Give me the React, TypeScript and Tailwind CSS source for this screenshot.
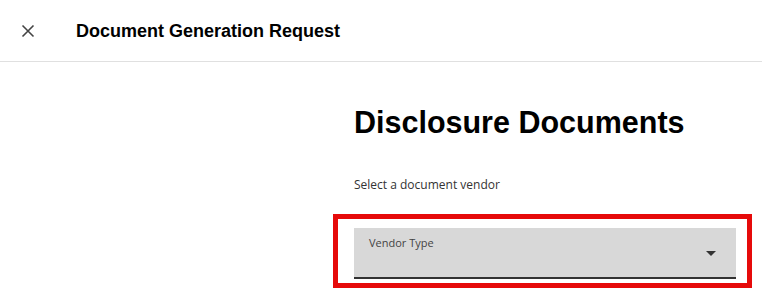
const CloseIcon = () => (
  <svg width="14" height="14" viewBox="0 0 14 14" className="text-[#444]">
    <path d="M1.5 1.5 L12.5 12.5 M12.5 1.5 L1.5 12.5" stroke="currentColor" strokeWidth="1.6" />
  </svg>
);

const VendorSelect = () => {
  return (
    <div className="flex h-[51px] w-[382px] flex-col border-b-2 border-[#333] bg-[#d8d8d8] px-[15px] pt-[7px]">
      <span className="font-['Open_Sans',sans-serif] text-[11px] leading-[16px] text-[#444]">Vendor Type</span>
      <div className="flex justify-end pr-[5px]">
        <svg width="10" height="5" viewBox="0 0 10 5">
          <path d="M0 0 L10 0 L5 5 Z" fill="#333" />
        </svg>
      </div>
    </div>
  );
};

export default function App() {
  return (
    <div className="h-[291px] w-[762px] overflow-hidden bg-white font-['Liberation_Sans',Arial,sans-serif] text-black">
      <header className="flex h-[62px] items-center border-b border-[#e0e0e0] pl-[21px]">
        <button className="flex h-[14px] w-[14px] items-center justify-center">
          <CloseIcon />
        </button>
        <h1 className="ml-[41px] text-[18px] font-bold leading-[22px]">Document Generation Request</h1>
      </header>

      <main className="ml-[333px] flex flex-col">
        <h2 className="ml-[21px] mt-[42px] text-[30.5px] font-bold leading-[36px]">Disclosure Documents</h2>
        <p className="ml-[21px] mt-[37px] font-['Open_Sans',sans-serif] text-[12px] leading-[16px] text-[#333]">
          Select a document vendor
        </p>
        <div className="mt-[21px] w-[419px] border-[5px] border-[#e60a0a] pb-[4px] pl-[16px] pr-[11px] pt-[9px]">
          <VendorSelect />
        </div>
      </main>
    </div>
  );
}
